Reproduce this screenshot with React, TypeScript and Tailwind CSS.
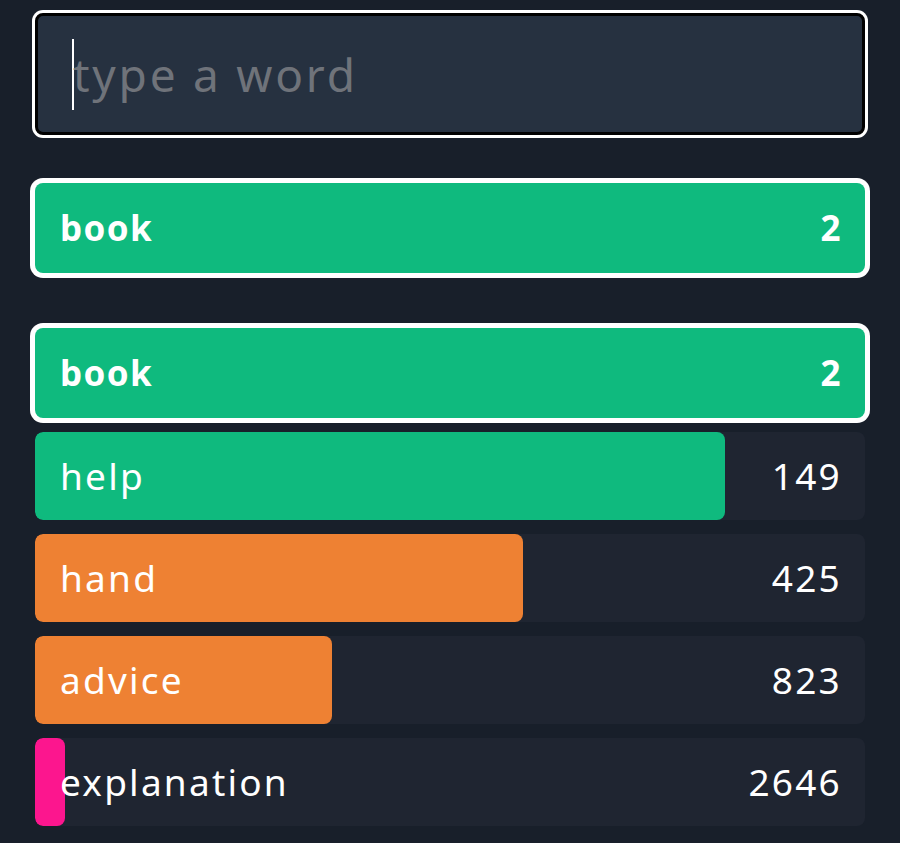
const rows = [
  { word: 'help', count: 149, pct: 83.1, color: 'bg-[#0fba7e]' },
  { word: 'hand', count: 425, pct: 58.8, color: 'bg-[#ee8133]' },
  { word: 'advice', count: 823, pct: 35.8, color: 'bg-[#ee8133]' },
  { word: 'explanation', count: 2646, pct: 3.6, color: 'bg-[#fc168e]' },
]

function Picked({ word, count }: { word: string; count: number }) {
  return (
    <div className="flex h-[90px] items-center justify-between rounded-[8px] bg-[#0fba7e] pl-[25px] pr-[23px] text-[35px] font-bold tracking-[0.04em] text-white ring-[5px] ring-white">
      <span>{word}</span>
      <span>{count}</span>
    </div>
  )
}

export default function App() {
  return (
    <div
      className="min-h-[843px] w-[900px] bg-[#181f2a] px-[35px] pt-[13px]"
      style={{ fontFamily: '"Noto Sans", "Open Sans", sans-serif' }}
    >
      <div className="flex h-[122px] items-center rounded-[8px] border-[3px] border-black bg-[#263140] pl-[34px] ring-[3px] ring-white">
        <span className="h-[71px] w-[2px] bg-white" />
        <span className="-ml-px text-[46px] tracking-[0.06em] text-[#6f737a]">type a word</span>
      </div>

      <div className="mt-[48px]">
        <Picked word="book" count={2} />
      </div>

      <div className="mt-[55px] flex flex-col gap-[14px]">
        <Picked word="book" count={2} />
        {rows.map((r) => (
          <div
            key={r.word}
            className="relative flex h-[88px] items-center justify-between overflow-hidden rounded-[8px] bg-[#1f2531] pl-[25px] pr-[23px] text-[37px] tracking-[0.06em] text-white"
          >
            <div
              className={`absolute inset-y-0 left-0 rounded-[8px] ${r.color}`}
              style={{ width: `${r.pct}%` }}
            />
            <span className="relative">{r.word}</span>
            <span className="relative">{r.count}</span>
          </div>
        ))}
      </div>
    </div>
  )
}
